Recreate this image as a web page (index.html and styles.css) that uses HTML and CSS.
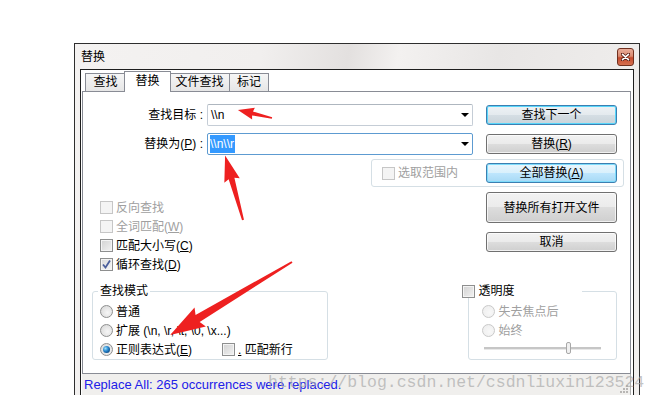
FILE: index.html
```html
<!DOCTYPE html>
<html lang="zh-CN">
<head>
    <meta charset="UTF-8">
    <meta name="viewport" content="width=device-width, initial-scale=1.0">
    <title>替换</title>
    <link rel="stylesheet" href="styles.css">
</head>
<body>
    <div class="window">
        <div class="titlebar">
            <span class="title">替换</span>
            <span class="close">
                <svg width="9" height="8" viewBox="0 0 9 8"><path d="M1 1 L8 7 M8 1 L1 7" stroke="#5a1d12" stroke-width="3.2" stroke-linecap="round"/><path d="M1.5 1.3 L7.5 6.7 M7.5 1.3 L1.5 6.7" stroke="#fff" stroke-width="1.6" stroke-linecap="round"/></svg>
            </span>
        </div>
        <div class="client">
            <div class="tabs">
                <div class="tab t1">查找</div>
                <div class="tab active">替换</div>
                <div class="tab t3">文件查找</div>
                <div class="tab t4">标记</div>
            </div>
            <div class="panel">
                <div class="row">
                    <span class="field-label">查找目标 :</span>
                    <div class="combo"><span class="combo-text">\\n</span><span class="drop"></span></div>
                    <button class="btn default">查找下一个</button>
                </div>
                <div class="row second">
                    <span class="field-label">替换为(<u>P</u>) :</span>
                    <div class="combo focus"><span class="combo-text"><span class="sel">\\n\\r</span></span><span class="drop"></span></div>
                    <button class="btn">替换(<u>R</u>)</button>
                </div>
                <div class="scope-group">
                    <span class="check disabled"><span class="box"></span><span>选取范围内</span></span>
                    <button class="btn hot">全部替换(<u>A</u>)</button>
                </div>
                <div class="options">
                    <div class="check-list">
                        <span class="check disabled"><span class="box"></span><span>反向查找</span></span>
                        <span class="check disabled"><span class="box"></span><span>全词匹配(<u>W</u>)</span></span>
                        <span class="check"><span class="box"></span><span>匹配大小写(<u>C</u>)</span></span>
                        <span class="check checked"><span class="box"><svg width="11" height="11" viewBox="0 0 11 11"><path d="M2 5.5 L4.5 8.5 L9 1.5" fill="none" stroke="#4b5f9c" stroke-width="1.8"/></svg></span><span>循环查找(<u>D</u>)</span></span>
                    </div>
                    <div class="side-buttons">
                        <button class="btn tall">替换所有打开文件</button>
                        <button class="btn">取消</button>
                    </div>
                </div>
                <div class="groups">
                    <div class="group mode">
                        <div class="legend">查找模式</div>
                        <div class="radio-row"><span class="radio"><span class="dot"></span><span>普通</span></span></div>
                        <div class="radio-row"><span class="radio"><span class="dot"></span><span>扩展 (\n, \r, \t, \0, \x...)</span></span></div>
                        <div class="radio-row">
                            <span class="radio checked wide"><span class="dot"></span><span>正则表达式(<u>E</u>)</span></span>
                            <span class="check"><span class="box"></span><span><u>.</u> 匹配新行</span></span>
                        </div>
                    </div>
                    <div class="group opacity">
                        <div class="legend"><span class="check"><span class="box"></span><span>透明度</span></span></div>
                        <div class="radio-row"><span class="radio disabled"><span class="dot"></span><span>失去焦点后</span></span></div>
                        <div class="radio-row"><span class="radio disabled"><span class="dot"></span><span>始终</span></span></div>
                        <div class="slider"><span class="thumb"></span></div>
                    </div>
                </div>
            </div>
            <div class="statusbar">
                <span>Replace All: 265 occurrences were replaced.</span>
                <svg class="grip" width="8" height="8" viewBox="0 0 8 8" fill="#b8b6b4"><rect x="6" y="0" width="2" height="2"/><rect x="3" y="3" width="2" height="2"/><rect x="6" y="3" width="2" height="2"/><rect x="0" y="6" width="2" height="2"/><rect x="3" y="6" width="2" height="2"/><rect x="6" y="6" width="2" height="2"/></svg>
            </div>
        </div>
    </div>

    <div class="watermark">https://blog.csdn.net/csdnliuxin123524</div>

    <svg class="arrows" width="657" height="395" viewBox="0 0 657 395">
        <g fill="#ee2020">
            <polygon transform="translate(272 118) rotate(193.2)" points="0,-0.8 20,-2 19,-6 35,0 19,6 20,2 0,0.8"/>
            <polygon transform="translate(243 220) rotate(254.5)" points="0,-1 43,-3 41,-8 67,0 41,8 43,3 0,1"/>
            <polygon transform="translate(292 262) rotate(149.1)" points="0,-1 110,-4 107,-11 142,0 107,11 110,4 0,1"/>
        </g>
    </svg>
</body>
</html>
```

FILE: styles.css
```css
html, body {
    margin: 0;
    height: 395px;
    overflow: hidden;
    background: #fff;
}
body {
    font-family: "Liberation Sans", "Noto Sans CJK SC", sans-serif;
    font-size: 12px;
    color: #000;
    position: relative;
}
u {
    text-decoration: underline;
    text-underline-offset: 1px;
}

/* window frame */
.window {
    box-sizing: border-box;
    width: 566px;
    height: 352px;
    margin: 43px 0 0 74px;
    padding: 0 5px;
    border: 1px solid #2e2e2e;
    border-bottom: none;
    background: linear-gradient(100deg, #f4f2f1 0%, #f1efee 30%, #e3e0df 44%, #f3f1f0 52%, #e8e6e5 68%, #f2f0ef 100%);
}
.titlebar {
    height: 25px;
    display: flex;
    align-items: center;
}
.title {
    padding-left: 1px;
    line-height: 14px;
}
.close {
    box-sizing: border-box;
    width: 17px;
    height: 18px;
    margin-left: auto;
    align-self: flex-start;
    margin-top: 4px;
    border: 1px solid #70301f;
    border-radius: 3px;
    background: linear-gradient(#e9ad9a 0%, #d98a70 45%, #c44b2f 55%, #d5704f 100%);
    display: flex;
    align-items: center;
    justify-content: center;
}

/* client area */
.client {
    box-sizing: border-box;
    height: 327px;
    border: 1px solid #1e1e1e;
    border-bottom: none;
    background: #fff;
    padding: 1px 2px 0 1px;
}
.tabs {
    position: relative;
    z-index: 1;
    display: flex;
    align-items: flex-end;
    height: 21px;
    padding-left: 3px;
    margin-bottom: -1px;
}
.tab {
    box-sizing: border-box;
    height: 18px;
    margin-bottom: 1px;
    border: 1px solid #898c95;
    border-bottom: none;
    background: linear-gradient(#f6f6f6, #e6e6e6);
    text-align: center;
    line-height: 17px;
}
.t1 { width: 41px; }
.t3 { width: 61px; }
.t4 { width: 40px; margin-left: -1px; }
.tab.active {
    position: relative;
    width: 47px;
    height: 21px;
    margin: 0 -2px;
    background: #fff;
    line-height: 18px;
}

.panel {
    box-sizing: border-box;
    width: 549px;
    height: 283px;
    border: 1px solid #898c95;
    background: #fff;
    padding: 11px 13px 0 0;
}
.row {
    display: flex;
    align-items: center;
    height: 23px;
}
.row.second {
    margin-top: 6px;
}
.field-label {
    box-sizing: border-box;
    width: 122px;
    padding-right: 2px;
    text-align: right;
    line-height: 14px;
}
.combo {
    box-sizing: border-box;
    width: 266px;
    height: 22px;
    margin-left: 2px;
    border: 1px solid #c5cdd6;
    border-top-color: #aeb6bf;
    border-radius: 2px;
    display: flex;
    align-items: center;
    padding-left: 3px;
}
.combo.focus {
    border-color: #5d9bd1;
    padding-left: 2px;
}
.combo-text {
    line-height: 18px;
}
.sel {
    display: inline-block;
    background: #3399ff;
    color: #fff;
    padding: 0 1px 0 0;
    line-height: 18px;
}
.drop {
    margin-left: auto;
    margin-right: 3px;
    width: 0;
    height: 0;
    border-top: 4px solid #000;
    border-left: 4px solid transparent;
    border-right: 4px solid transparent;
}

/* buttons */
.btn {
    box-sizing: border-box;
    width: 131px;
    height: 20px;
    margin-left: auto;
    padding: 0;
    border: 1px solid #707070;
    border-radius: 3px;
    background: linear-gradient(#f2f2f2 0%, #ebebeb 49%, #dddddd 50%, #cfcfcf 100%);
    box-shadow: inset 0 0 0 1px rgba(255, 255, 255, 0.7);
    font: inherit;
    line-height: 16px;
    color: #000;
}
.btn.default {
    border-color: #3c7fb1;
    box-shadow: inset 0 0 0 1px #58d6fa;
    background: linear-gradient(#eef2f5 0%, #e4eaee 49%, #d5dee4 50%, #cad4da 100%);
}
.btn.hot {
    border-color: #3c7fb1;
    box-shadow: inset 0 0 0 1px #7fdcfb;
    background: linear-gradient(#eaf6fd 0%, #d9f0fc 49%, #bee6fd 50%, #a7d9f5 100%);
}
.btn.tall {
    height: 31px;
}

.scope-group {
    box-sizing: border-box;
    width: 253px;
    height: 28px;
    margin: 4px 0 0 288px;
    padding: 0 6px 0 10px;
    border: 1px solid #d5dfe5;
    border-radius: 3px;
    display: flex;
    align-items: center;
}

/* checkboxes and radios */
.check, .radio {
    display: flex;
    align-items: center;
    gap: 3px;
    line-height: 14px;
    white-space: nowrap;
}
.box {
    box-sizing: border-box;
    width: 13px;
    height: 13px;
    flex: none;
    border: 1px solid #8e8f8f;
    background: linear-gradient(135deg, #d2d2d2 0%, #f2f2f2 100%);
    box-shadow: inset 0 0 0 1px #f4f4f4;
    display: flex;
    align-items: center;
    justify-content: center;
}
.check.disabled {
    color: #a0a0a0;
}
.check.disabled .box {
    border-color: #c6c6c6;
    background: #f4f4f4;
    box-shadow: none;
}
.check.checked .box {
    background: linear-gradient(135deg, #dadada 0%, #f6f6f6 100%);
}
.dot {
    box-sizing: border-box;
    width: 13px;
    height: 13px;
    flex: none;
    border: 1px solid #8e8f8f;
    border-radius: 50%;
    background: radial-gradient(circle at 60% 60%, #f6f6f6 0%, #e2e2e2 60%, #cfcfcf 100%);
    display: flex;
    align-items: center;
    justify-content: center;
}
.radio.checked .dot::after {
    content: "";
    width: 7px;
    height: 7px;
    border-radius: 50%;
    background: radial-gradient(circle at 35% 35%, #9fe0fb 0%, #2a8ad0 40%, #0d4f8c 75%, #0a3360 100%);
}
.radio.disabled {
    color: #a0a0a0;
}
.radio.disabled .dot {
    border-color: #c9c9c9;
    background: radial-gradient(circle at 60% 60%, #f8f8f8 0%, #ececec 100%);
}

.options {
    display: flex;
    margin-top: 5px;
}
.check-list {
    display: flex;
    flex-direction: column;
    margin-left: 17px;
    padding-top: 6px;
}
.check-list .check {
    height: 19px;
}
.side-buttons {
    margin-left: auto;
    display: flex;
    flex-direction: column;
    gap: 9px;
}

/* bottom group boxes */
.groups {
    display: flex;
    align-items: flex-start;
    margin-top: 17px;
}
.group {
    box-sizing: border-box;
    border: 1px solid #d5dfe5;
    border-radius: 3px;
    line-height: 14px;
}
.legend {
    display: block;
    width: max-content;
    height: 14px;
    margin-top: -8px;
    background: #fff;
}
.mode {
    width: 237px;
    margin-left: 9px;
    padding-left: 7px;
}
.mode .legend {
    margin-left: -2px;
    padding: 0 2px;
}
.radio-row {
    display: flex;
    align-items: center;
    height: 19px;
}
.legend + .radio-row {
    margin-top: 4px;
}
.radio.wide {
    width: 122px;
}
.opacity {
    width: 149px;
    margin-left: 140px;
    padding: 0 0 3px 13px;
}
.opacity .legend {
    width: 120px;
    margin-left: -20px;
}
.slider {
    position: relative;
    width: 117px;
    height: 16px;
    margin-left: 2px;
    display: flex;
    align-items: center;
}
.slider::before {
    content: "";
    flex: 1;
    height: 2px;
    background: #c6c6c6;
    border-bottom: 1px solid #e8e8e8;
}
.thumb {
    position: absolute;
    left: 82px;
    top: 2px;
    box-sizing: border-box;
    width: 5px;
    height: 12px;
    border: 1px solid #a8a8a8;
    border-radius: 2px;
    background: #f0f0f0;
}

/* status bar */
.statusbar {
    box-sizing: border-box;
    width: 549px;
    height: 21px;
    padding-left: 2px;
    background: #f0efed;
    border-right: 1px solid #b0b0b0;
    color: #2020e8;
    font-size: 13px;
    line-height: 21px;
    display: flex;
    align-items: center;
}
.grip {
    margin-left: auto;
    margin-right: 2px;
    align-self: flex-end;
    margin-bottom: 2px;
}

/* overlays */
.watermark {
    position: absolute;
    left: 268px;
    top: 373px;
    font-family: "Liberation Mono", monospace;
    font-size: 16.5px;
    line-height: 20px;
    color: rgba(170, 170, 170, 0.7);
    white-space: nowrap;
    pointer-events: none;
}
.arrows {
    position: absolute;
    left: 0;
    top: 0;
    pointer-events: none;
}
```
